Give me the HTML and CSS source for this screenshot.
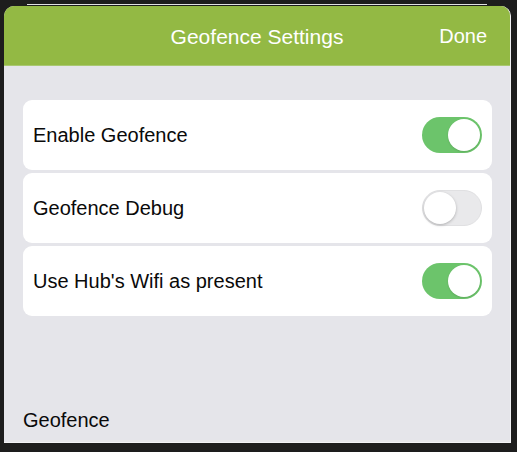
FILE: index.html
```html
<!DOCTYPE html>
<html>
<head>
<meta charset="utf-8">
<link rel="stylesheet" href="styles.css">
</head>
<body>
<div class="backsheet"></div>
<div class="sheet">
  <header class="navbar">
    <div class="title">Geofence Settings</div>
    <div class="done">Done</div>
  </header>
  <main class="content">
    <div class="group">
      <div class="row">
        <span class="label">Enable Geofence</span>
        <span class="toggle on"><span class="knob"></span></span>
      </div>
      <div class="row">
        <span class="label">Geofence Debug</span>
        <span class="toggle off"><span class="knob"></span></span>
      </div>
      <div class="row">
        <span class="label">Use Hub's Wifi as present</span>
        <span class="toggle on"><span class="knob"></span></span>
      </div>
    </div>
    <div class="footer-label">Geofence</div>
  </main>
</div>
</body>
</html>
```

FILE: styles.css
```css
html, body {
  margin: 0;
  padding: 0;
}
body {
  width: 517px;
  height: 452px;
  background: #1d1d1d;
  font-family: "Liberation Sans", Arial, sans-serif;
  overflow: hidden;
}
.backsheet {
  margin: 4px 0 0 27px;
  width: 460px;
  height: 1px;
  background: #e2e2e2;
}
.sheet {
  margin: 1px 0 0 4px;
  width: 506px;
  height: 436px;
  border-right: 1px solid #f2f2f4;
  border-bottom: 1px solid #f2f2f4;
  border-radius: 10px 10px 0 0;
  background: #e5e5ea;
  overflow: hidden;
}
.navbar {
  position: relative;
  height: 59px;
  background: #93b944;
  border-bottom: 1px solid #a9c871;
  display: flex;
  align-items: center;
  justify-content: center;
  color: #ffffff;
}
.title {
  font-size: 21px;
  padding-top: 2px;
}
.done {
  position: absolute;
  right: 23px;
  top: 19px;
  font-size: 20px;
}
.content {
  padding: 34px 18px 0 19px;
}
.group {
  display: flex;
  flex-direction: column;
  gap: 3px;
}
.row {
  height: 70px;
  background: #ffffff;
  border-radius: 9px;
  display: flex;
  align-items: center;
  justify-content: space-between;
  padding: 0 10px 0 10px;
}
.label {
  font-size: 20px;
  padding-top: 1px;
  color: #0a0a0a;
}
.toggle {
  position: relative;
  width: 60px;
  height: 36px;
  border-radius: 18px;
  box-sizing: border-box;
}
.toggle.on {
  background: #6cc46b;
}
.toggle.off {
  background: #e9e9eb;
  border: 1px solid #e0e0e2;
}
.knob {
  position: absolute;
  top: 2px;
  width: 32px;
  height: 32px;
  border-radius: 50%;
  background: #ffffff;
}
.toggle.on .knob {
  right: 2px;
  box-shadow: 0 1px 2px rgba(0,0,0,0.12);
}
.toggle.off .knob {
  left: 1px;
  top: 1px;
  box-shadow: 0 1px 3px rgba(0,0,0,0.25);
}
.footer-label {
  margin-top: 92px;
  margin-left: 0;
  font-size: 20px;
  line-height: 24px;
  color: #0a0a0a;
}
```
